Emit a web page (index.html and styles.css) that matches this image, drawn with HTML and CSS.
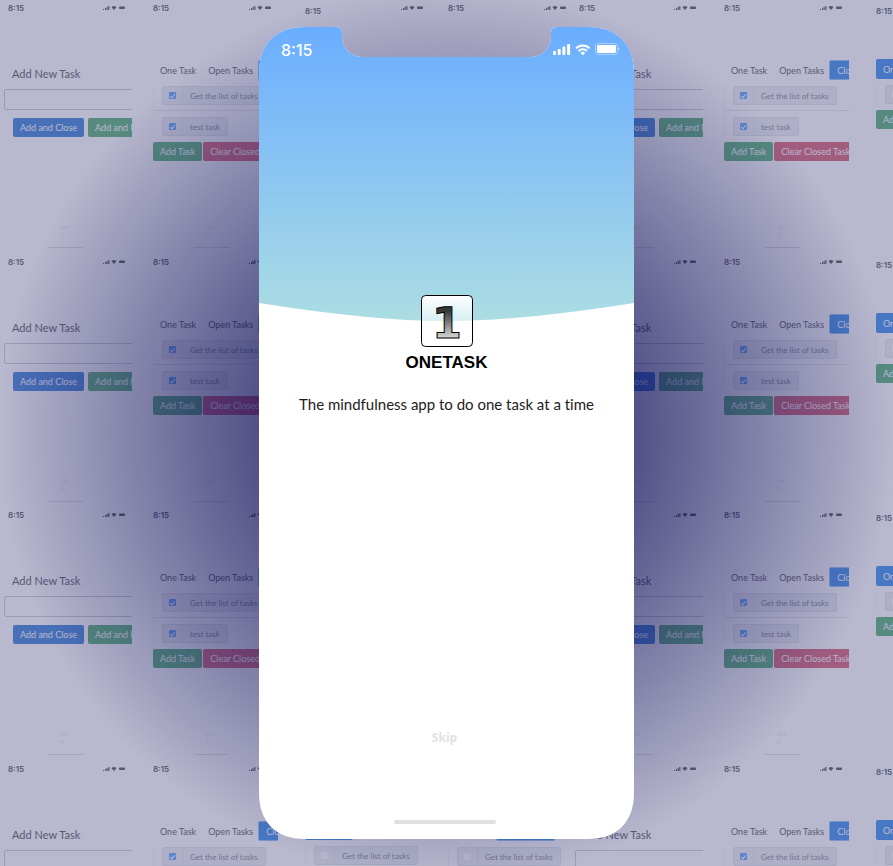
FILE: index.html
```html
<!DOCTYPE html>
<html lang="en">
<head>
<meta charset="utf-8">
<meta name="viewport" content="width=device-width, initial-scale=1">
<title>OneTask</title>
<link rel="stylesheet" href="styles.css">
</head>
<body>
<div class="wall" id="wall"></div>
<div class="veil"></div>

<main class="stage">
  <section class="phone">
    <svg class="wave" viewBox="0 0 375 294" preserveAspectRatio="none" aria-hidden="true">
      <defs>
        <linearGradient id="sky" x1="0" y1="0" x2="0" y2="1">
          <stop offset="0" stop-color="#6aadff"/>
          <stop offset="1" stop-color="#acdde3"/>
        </linearGradient>
      </defs>
      <path d="M0 0H375V276Q262 294 187.500 294Q113 294 0 276Z" fill="url(#sky)"/>
    </svg>
    <header class="status">
      <span class="clock">8:15</span>
      <svg class="indicators" width="67" height="14" viewBox="0 0 67 14" fill="#fff" aria-hidden="true">
        <rect x="0" y="8" width="3" height="4" rx="1"/>
        <rect x="4.700" y="6" width="3" height="6" rx="1"/>
        <rect x="9.400" y="3.500" width="3" height="8.500" rx="1"/>
        <rect x="14.100" y="1" width="3" height="11" rx="1"/>
        <path d="M22.300 4.700A10.500 10.500 0 0 1 37.300 4.700L35.900 6.100A8.500 8.500 0 0 0 23.700 6.100Z"/>
        <path d="M24.900 7.400A6.900 6.900 0 0 1 34.700 7.400L33.300 8.800A5 5 0 0 0 26.300 8.800Z"/>
        <path d="M27.500 10A3.200 3.200 0 0 1 32.100 10L29.800 12.300Z"/>
        <rect x="42.500" y=".5" width="22" height="11" rx="2.700" fill="none" stroke="#fff" stroke-opacity=".4"/>
        <rect x="44" y="2" width="19" height="8" rx="1.400"/>
        <path d="M65.500 4.200q1.400.5 1.400 1.800t-1.400 1.800z" opacity=".5"/>
      </svg>
    </header>
    <div class="intro">
      <svg class="logo" width="52" height="52" viewBox="0 0 52 52" role="img" aria-label="OneTask logo">
        <defs>
          <linearGradient id="glass" x1="0" y1="0" x2="0" y2="1">
            <stop offset="0" stop-color="#fff"/>
            <stop offset="1" stop-color="#fff" stop-opacity="0"/>
          </linearGradient>
          <linearGradient id="steel" gradientUnits="userSpaceOnUse" x1="0" y1="11" x2="0" y2="44">
            <stop offset=".15" stop-color="#383838"/>
            <stop offset="1" stop-color="#dcdcdc"/>
          </linearGradient>
        </defs>
        <rect x=".5" y=".5" width="51" height="51" rx="4" fill="url(#glass)" stroke="#000"/>
        <text class="digit" x="26" y="43" text-anchor="middle" fill="url(#steel)" stroke="#000">1</text>
      </svg>
      <h1 class="name">ONETASK</h1>
      <p class="tagline">The mindfulness app to do one task at a time</p>
    </div>
    <footer class="foot">
      <button class="skip" type="button">Skip</button>
      <div class="home"></div>
    </footer>
  </section>
</main>

<template id="bar">
  <div class="mini-status">
    <span>8:15</span>
    <svg width="24" height="6" viewBox="0 0 24 6" fill="#222" aria-hidden="true">
      <path d="M0 4h1v1H0zM2 3h1v2H2zM3.500 2h1.200v3H3.500zM5.200 1h1.200v4H5.200z"/>
      <path d="M8.500 2.300Q11-.2 13.500 2.300L11 5Z"/>
      <rect x="16" y="1.400" width="6" height="2.600" rx=".8"/>
    </svg>
  </div>
</template>

<template id="end">
  <div class="mini-foot"><span>Ski<br>p</span><i></i></div>
</template>

<template id="add">
  <form class="body form">
    <label class="title">Add New Task<input class="field" type="text"></label>
    <div class="actions spaced">
      <button class="btn blue" type="button">Add and Close</button>
      <button class="btn green" type="button">Add and New</button>
    </div>
  </form>
</template>

<template id="closed">
  <div class="body">
    <nav class="tabs"><a href="#">One Task</a><a href="#">Open Tasks</a><a href="#" class="active ring">Closed Tasks</a></nav>
    <div class="list">
      <label class="item"><input type="checkbox" checked><span>Get the list of tasks</span></label>
      <hr>
      <label class="item"><input type="checkbox" checked><span>test task</span></label>
    </div>
    <div class="actions">
      <button class="btn green" type="button">Add Task</button>
      <button class="btn red" type="button">Clear Closed Tasks</button>
    </div>
  </div>
</template>

<template id="one">
  <div class="body">
    <nav class="tabs"><a href="#" class="active">One Task</a><a href="#">Open Tasks</a></nav>
    <div class="list">
      <label class="item"><input type="checkbox"><span>Get the list of tasks</span></label>
    </div>
    <div class="actions"><button class="btn green" type="button">Add Task</button></div>
  </div>
</template>

<template id="open">
  <div class="body">
    <nav class="tabs"><a href="#">One Task</a><a href="#" class="active ring">Open Tasks</a></nav>
    <div class="list">
      <label class="item"><input type="checkbox"><span>Get the list of tasks</span></label>
    </div>
    <div class="actions"><button class="btn green" type="button">Add Task</button></div>
  </div>
</template>

<script src="script.js"></script>
</body>
</html>
```
FILE: styles.css
```css
* {
  box-sizing: border-box;
}

body {
  margin: 0;
  min-height: 100vh;
  overflow: hidden;
  background: #fff;
  font-family: "Liberation Sans", sans-serif;
}

/* Wall of small screens behind the phone */
.wall {
  position: absolute;
  inset: 0;
  overflow: hidden;
  display: grid;
  grid-auto-rows: 254px 253px;
  font-family: Lato, sans-serif;
  font-size: 9px;
  line-height: 12px;
  color: #212529;
}

.wall-row {
  display: flex;
  padding-left: 4px;
}

.slot {
  flex: none;
}

.slot.add { width: 149px; }
.slot.closed { width: 152px; }
.slot.one { width: 143px; }
.slot.open { width: 127px; }

.screen {
  width: 125px;
  height: 253px;
  overflow: hidden;
  display: flex;
  flex-direction: column;
}

.add .screen {
  width: 128px;
}

.mini-status {
  display: flex;
  justify-content: space-between;
  height: 60px;
  padding: 2px 5px 0 0;
  font: 600 8px/12px Inter, sans-serif;
}

.add .mini-status {
  padding-left: 4px;
}

.mini-status svg {
  margin-top: 3px;
}

.one .mini-status {
  height: 59px;
}

.one .mini-status span {
  margin-top: 3px;
}

.body {
  flex: 1;
  width: 240px;
}

.title {
  display: block;
  padding-top: 6px;
  font-size: 11px;
  line-height: 16px;
  text-indent: 8px;
}

.field {
  display: block;
  width: 100%;
  height: 21px;
  margin-top: 7px;
  border: 1px solid #b9bcc4;
  border-radius: 2px;
  background: #fff;
}

.tabs {
  display: flex;
}

.tabs a {
  height: 20px;
  padding: 0 5px 0 7px;
  line-height: 21px;
  color: #212529;
  text-decoration: none;
  border-radius: 2px;
}

.tabs .active {
  background: #006ce8;
  color: #fff;
}

.tabs .ring {
  border: 1px solid #6eaef5;
  line-height: 19px;
}

.list {
  border-left: 1px solid #f1f1f1;
}

.list hr {
  margin: 5px 0 0;
  border: 0;
  border-top: 1px solid #dcdfe4;
}

.item {
  display: flex;
  width: max-content;
  height: 19px;
  margin: 6px 0 0 8px;
  border: 1px solid #d8dde2;
  border-radius: 2px;
  background: #e9ecef;
  color: #5f666d;
  font-size: 8px;
  line-height: 18px;
}

.item input {
  appearance: none;
  width: 7px;
  height: 7px;
  margin: 5px 6px;
  border-radius: 1px;
  background: #fff;
}

.item input:checked {
  background: #2b8cff;
}

.item input:checked::after {
  content: "";
  display: block;
  width: 2px;
  height: 4px;
  margin: 1px 0 0 2px;
  border: solid #fff;
  border-width: 0 1px 1px 0;
  transform: rotate(40deg);
}

.item span {
  padding: 0 7px;
  border-left: 1px solid #d8dde2;
}

.actions {
  display: flex;
  gap: 1px;
  margin-top: 6px;
}

.actions.spaced {
  gap: 4px;
  margin: 8px 0 0 9px;
}

.btn {
  height: 19px;
  padding: 0 7px;
  border: 0;
  border-radius: 2px;
  color: #fff;
  font: inherit;
  white-space: nowrap;
}

.blue { background: #005ccc; }
.green { background: #22984a; }
.red { background: #cc3048; }

.mini-foot {
  width: 35px;
  height: 29px;
  margin-left: 41px;
  color: #eaeaea;
  font: 700 6px/7px "Open Sans", sans-serif;
}

.add .mini-foot {
  margin-left: 44px;
}

.mini-foot span {
  display: block;
  padding: 0 0 9px 12px;
}

.mini-foot i {
  display: block;
  height: 1px;
  background: #d4d4d4;
}

/* Tint over the wall, darker towards the centre */
.veil {
  position: absolute;
  inset: 0;
  background: radial-gradient(circle, rgba(37, 37, 105, .8) 30%, rgba(128, 128, 168, .56) 72%);
}

/* Phone */
.stage {
  position: relative;
  display: grid;
  place-items: center;
  min-height: 100vh;
}

.phone {
  display: grid;
  grid-template-rows: auto 1fr auto;
  width: 375px;
  height: 812px;
  background: #fff;
  color: #000;
  clip-path: path("M0 46C0 17 17 0 46 0H77Q83 0 83 6V9C83 22 92 30 105 30H270C283 30 292 22 292 9V6Q292 0 298 0H329C358 0 375 17 375 46V766C375 795 358 812 329 812H46C17 812 0 795 0 766Z");
}

.wave {
  grid-area: 1 / 1 / 3 / 2;
  width: 100%;
  height: 294px;
}

.status {
  grid-area: 1 / 1;
  display: flex;
  justify-content: space-between;
  align-items: center;
  height: 44px;
  padding: 2px 14px 0 22px;
}

.clock {
  color: #fff;
  font: 500 16px/20px Inter, sans-serif;
}

.intro {
  grid-area: 2 / 1;
  display: flex;
  flex-direction: column;
  align-items: center;
  padding-top: 224px;
}

.digit {
  font: 700 43px "DejaVu Sans", sans-serif;
  text-rendering: geometricPrecision;
}

.name {
  margin: 6px 0 0;
  font-size: 17px;
  line-height: 20px;
}

.tagline {
  margin: 20px 0 0;
  color: #1c1c1c;
  font: 400 15px/22px Lato, sans-serif;
  font-variant-ligatures: none;
}

.foot {
  grid-area: 3 / 1;
  display: flex;
  flex-direction: column;
  align-items: center;
  gap: 74px;
  padding: 0 4px 15px 0;
}

.skip {
  padding: 0;
  border: 0;
  background: none;
  color: #e2e2e2;
  font: 700 12px/16px "Open Sans", sans-serif;
}

.home {
  width: 102px;
  height: 4px;
  border-radius: 2px;
  background: #e0e0e0;
}
```
FILE: script.js
```js
const wall = document.getElementById("wall");
const part = (id) => document.getElementById(id).content.cloneNode(true);
const order = ["add", "closed", "one", "open"];

// Enough rows and screens to cover the window
const rows = Math.ceil(window.innerHeight / 253);
const sets = Math.ceil(window.innerWidth / 571);

for (let r = 0; r < rows; r++) {
  const row = document.createElement("div");
  row.className = "wall-row";
  for (let i = 0; i < sets * order.length; i++) {
    const kind = order[i % order.length];
    const slot = document.createElement("div");
    const screen = document.createElement("div");
    slot.className = "slot " + kind;
    screen.className = "screen";
    screen.append(part("bar"), part(kind), part("end"));
    slot.append(screen);
    row.append(slot);
  }
  wall.append(row);
}
```
